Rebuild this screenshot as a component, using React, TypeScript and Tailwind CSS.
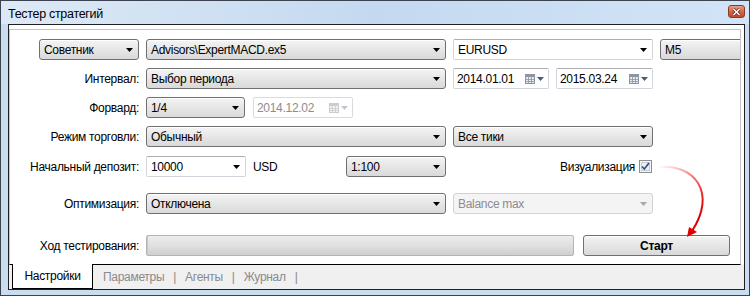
import type { ReactNode } from 'react';
import clsx from 'clsx';

function DropArrow({ color = '#000' }: { color?: string }) {
    return (
        <svg width="7" height="4" viewBox="0 0 7 4" className="shrink-0">
            <path d="M0 0H7L3.5 4Z" fill={color} />
        </svg>
    );
}

function CalendarIcon({ faded }: { faded?: boolean }) {
    const edge = faded ? '#c9ccd1' : '#8c96a3';
    const fill = faded ? '#f3f4f6' : '#e4e8ee';
    return (
        <svg width="10" height="10" viewBox="0 0 10 10" className="shrink-0">
            <rect x="0.5" y="0.5" width="9" height="9" fill={fill} stroke={edge} />
            <rect x="1" y="1" width="8" height="2" fill={edge} />
            <path d="M1 5.5H9M1 7.5H9M3.5 3V9M6.5 3V9" stroke={edge} strokeWidth="0.8" />
        </svg>
    );
}

// classic Win7 style combo box
function Combo({ className, children, disabled }: { className: string; children: ReactNode; disabled?: boolean }) {
    return (
        <div
            className={clsx(
                'h-[21px] shrink-0 rounded-[3px] border flex items-center justify-between pl-[4px] pr-[5px]',
                disabled
                    ? 'border-[#d3d3d3] bg-[#f4f4f4] text-[#8c8c8c]'
                    : 'border-[#707070] bg-linear-to-b from-[#f4f4f4] to-[#d9d9d9] shadow-[inset_0_1px_0_#ffffff]',
                className
            )}
        >
            <span className="whitespace-nowrap">{children}</span>
            <DropArrow color={disabled ? '#a8a8a8' : '#000'} />
        </div>
    );
}

function EditCombo({ className, children }: { className: string; children: ReactNode }) {
    return (
        <div className={clsx('h-[21px] shrink-0 rounded-[2px] border border-[#d2d5dc] border-t-[#abadb3] bg-white flex items-center justify-between pl-[4px] pr-[5px]', className)}>
            <span className="whitespace-nowrap">{children}</span>
            <DropArrow />
        </div>
    );
}

function DateBox({ className, value, disabled }: { className: string; value: string; disabled?: boolean }) {
    return (
        <div
            className={clsx(
                'h-[21px] shrink-0 rounded-[2px] border bg-white flex items-center pl-[3px] pr-[4px]',
                disabled ? 'border-[#dadada] text-[#8d8d8d]' : 'border-[#d2d5dc] border-t-[#abadb3]',
                className
            )}
        >
            <span className="flex-1 whitespace-nowrap">{value}</span>
            <CalendarIcon faded={disabled} />
            <span className="ml-[2px]">
                <DropArrow color={disabled ? '#c2c7cf' : '#4b5d7a'} />
            </span>
        </div>
    );
}

function Row({ label, className, children }: { label?: string; className: string; children: ReactNode }) {
    return (
        <div className={clsx('flex items-center shrink-0', className)}>
            {label !== undefined && <div className="w-[129px] shrink-0 text-right whitespace-nowrap">{label}</div>}
            <div className={clsx('flex items-center', label !== undefined && 'ml-[7px]')}>{children}</div>
        </div>
    );
}

export default function App() {
    return (
        <div className="relative w-[750px] h-[296px] border border-[#3c4350] bg-[#c9dcf0] flex flex-col font-['Liberation_Sans',Arial,sans-serif] text-[12px] tracking-[-0.3px] text-black overflow-hidden">
            {/* title bar */}
            <div className="h-[23px] shrink-0 flex items-start justify-between pl-[7px] pr-[4px] bg-linear-to-r from-[#dde9f6] via-[#c4d9f0] to-[#d2e4f7]">
                <span className="mt-[4px] text-[12.5px]">Тестер стратегий</span>
                <div className="mt-[4px] w-[17px] h-[13px] rounded-[3px] border border-[#8b3a28] bg-linear-to-b from-[#e9a08c] via-[#d3664c] to-[#c24a2e] flex items-center justify-center">
                    <svg width="9" height="8" viewBox="0 0 9 8">
                        <path d="M1.5 1L7.5 7M7.5 1L1.5 7" stroke="#5a2418" strokeWidth="3" />
                        <path d="M1.5 1L7.5 7M7.5 1L1.5 7" stroke="#ffffff" strokeWidth="1.6" />
                    </svg>
                </div>
            </div>

            {/* body */}
            <div className="flex-1 ml-[7px] mr-[4px] mb-[5px] border border-[#1f1f1f] bg-[#f0f0f0] flex flex-col">
                <div className="flex-1 bg-white pt-[4px] pr-[3px] flex flex-col">
                    <div className="flex-1 border-l border-t border-r border-[#c4c4c4] border-b border-b-black overflow-hidden flex flex-col">
                        <Row className="mt-[9px]">
                            <Combo className="ml-[29px] w-[100px]">Советник</Combo>
                            <Combo className="ml-[7px] w-[300px]">Advisors\ExpertMACD.ex5</Combo>
                            <EditCombo className="ml-[7px] w-[200px]">EURUSD</EditCombo>
                            <Combo className="ml-[7px] w-[100px]">M5</Combo>
                        </Row>

                        <Row label="Интервал:" className="mt-[8px]">
                            <Combo className="w-[300px]">Выбор периода</Combo>
                            <DateBox className="ml-[7px] w-[96px]" value="2014.01.01" />
                            <DateBox className="ml-[7px] w-[97px]" value="2015.03.24" />
                        </Row>

                        <Row label="Форвард:" className="mt-[8px]">
                            <Combo className="w-[99px]">1/4</Combo>
                            <DateBox className="ml-[8px] w-[100px]" value="2014.12.02" disabled />
                        </Row>

                        <Row label="Режим торговли:" className="mt-[8px]">
                            <Combo className="w-[300px]">Обычный</Combo>
                            <Combo className="ml-[7px] w-[200px]">Все тики</Combo>
                        </Row>

                        <Row label="Начальный депозит:" className="mt-[9px]">
                            <EditCombo className="w-[100px]">10000</EditCombo>
                            <span className="ml-[7px] w-[93px] shrink-0">USD</span>
                            <Combo className="w-[100px]">1:100</Combo>
                            <div className="ml-[7px] w-[200px] flex items-center justify-end gap-[4px] pr-[1px]">
                                <span>Визуализация</span>
                                <svg width="13" height="13" viewBox="0 0 13 13" className="shrink-0">
                                    <rect x="0.5" y="0.5" width="12" height="12" fill="#f6f6f6" stroke="#8e8f8f" />
                                    <rect x="2.5" y="2.5" width="8" height="8" fill="#eceff3" stroke="#c7cbd1" />
                                    <path d="M3 6.5L5.3 9L10 3" fill="none" stroke="#34508f" strokeWidth="1.7" />
                                </svg>
                            </div>
                        </Row>

                        <Row label="Оптимизация:" className="mt-[16px]">
                            <Combo className="w-[300px]">Отключена</Combo>
                            <Combo className="ml-[7px] w-[200px]" disabled>Balance max</Combo>
                        </Row>

                        <Row label="Ход тестирования:" className="mt-[21px]">
                            <div className="w-[428px] h-[21px] shrink-0 rounded-[2px] border border-[#b4b4b4] bg-linear-to-b from-[#ececec] via-[#e0e0e0] to-[#cfcfcf] shadow-[inset_1px_0_0_#c8c8c8]" />
                            <button className="ml-[9px] w-[147px] h-[21px] shrink-0 rounded-[3px] border border-[#707070] bg-linear-to-b from-[#f4f4f4] to-[#d9d9d9] shadow-[inset_0_1px_0_#ffffff] font-bold text-[12px]">
                                Старт
                            </button>
                        </Row>
                    </div>
                </div>

                {/* tabs */}
                <div className="h-[24px] shrink-0 flex items-start pl-[3px]">
                    <div className="-mt-px w-[81px] h-[25px] shrink-0 bg-white border-l border-r border-b border-black flex items-center justify-center">
                        Настройки
                    </div>
                    <div className="h-[23px] flex items-center text-[#8a8a8a]">
                        <span className="ml-[10px]">Параметры</span>
                        <span className="ml-[9px]">|</span>
                        <span className="ml-[9px]">Агенты</span>
                        <span className="ml-[9px]">|</span>
                        <span className="ml-[9px]">Журнал</span>
                        <span className="ml-[9px]">|</span>
                    </div>
                </div>
            </div>

            {/* red hint arrow */}
            <svg className="absolute inset-0 pointer-events-none" width="750" height="296" viewBox="0 0 750 296">
                <defs>
                    <linearGradient id="hint" gradientUnits="userSpaceOnUse" x1="656" y1="166" x2="705" y2="205">
                        <stop offset="0" stopColor="#ff2020" stopOpacity="0" />
                        <stop offset="1" stopColor="#e00000" stopOpacity="1" />
                    </linearGradient>
                </defs>
                <path d="M656 166C694 162 716 192 691 230" fill="none" stroke="url(#hint)" strokeWidth="2" />
                <path d="M686 236L688 226L696 231Z" fill="#e00000" />
            </svg>
        </div>
    );
}
